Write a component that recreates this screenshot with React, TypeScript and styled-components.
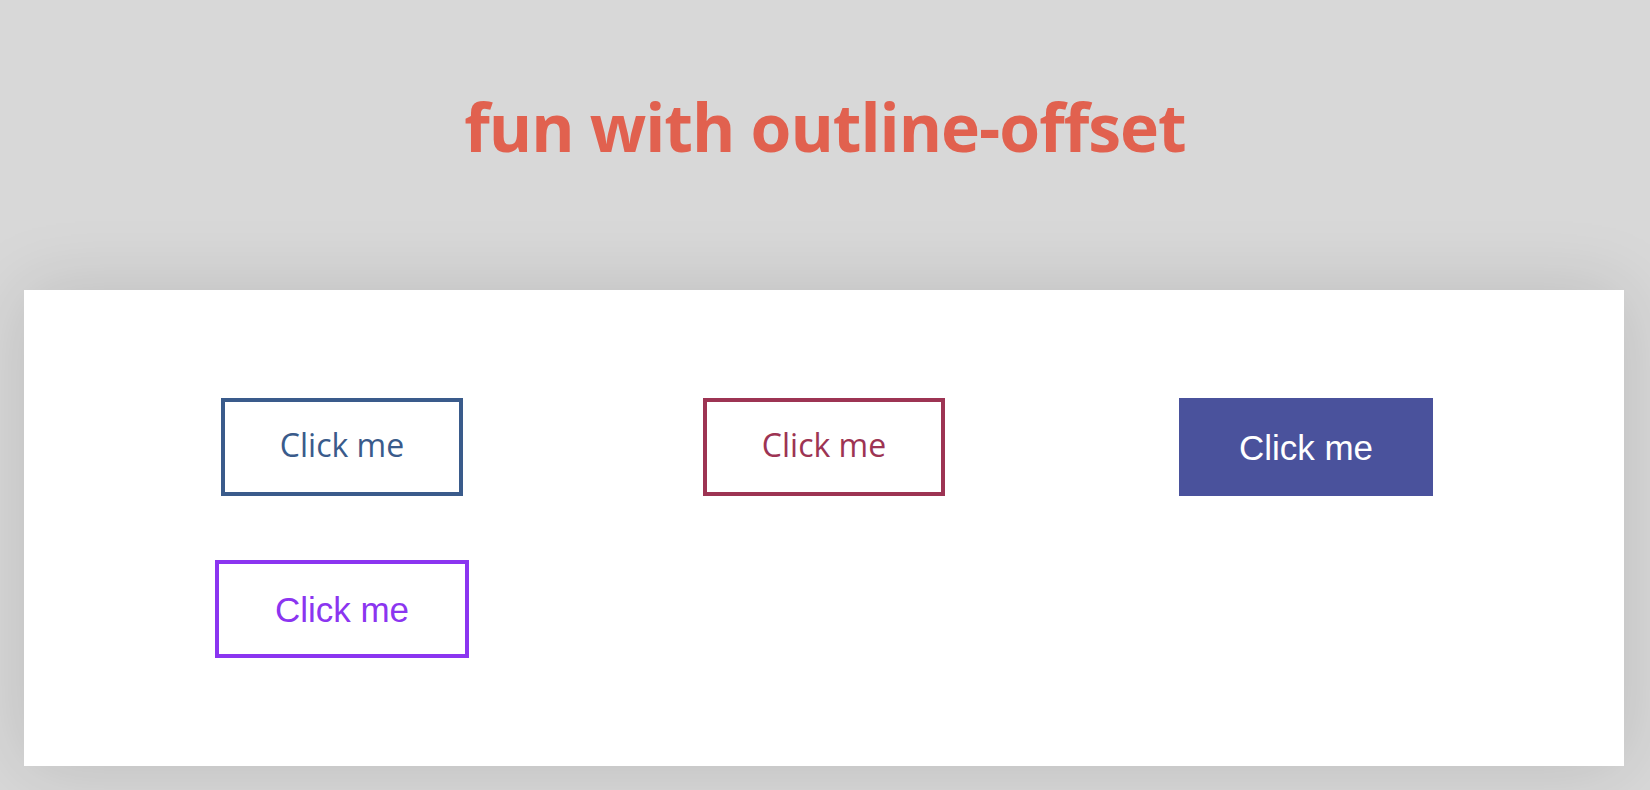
import React from "react";
import styled, { createGlobalStyle, css } from "styled-components";

const Global = createGlobalStyle`
  html, body { margin: 0; padding: 0; }
  body {
    background: #d8d8d8;
    font-family: "Open Sans", "Liberation Sans", sans-serif;
    min-height: 790px;
  }
  * { box-sizing: border-box; }
`;

const Header = styled.header`
  height: 290px;
  display: flex;
  align-items: center;
  justify-content: center;
  padding-bottom: 38px;
`;

const Title = styled.h1`
  margin: 0;
  font-family: "Open Sans", "Liberation Sans", sans-serif;
  font-weight: 700;
  font-size: 66px;
  letter-spacing: -1px;
  color: #e1614f;
  line-height: 1;
`;

const Panel = styled.main`
  margin: 0 26px 0 24px;
  height: 476px;
  background: #ffffff;
  box-shadow: 0 0 70px rgba(0, 0, 0, 0.13);
  padding: 76px 77px;
  display: grid;
  grid-template-columns: repeat(3, 482px);
  grid-auto-rows: 162px;
`;

const Cell = styled.div`
  display: flex;
  align-items: center;
  justify-content: center;
`;

type Variant = "blue" | "crimson" | "filled" | "violet";

const variants: Record<Variant, ReturnType<typeof css>> = {
  blue: css`
    width: 242px;
    border: 4px solid #3a5b8b;
    color: #3a5b8b;
    font-family: "Open Sans", sans-serif;
    font-size: 32px;
    padding-bottom: 5px;
  `,
  crimson: css`
    width: 242px;
    border: 4px solid #9d3453;
    color: #9d3453;
    font-family: "Open Sans", sans-serif;
    font-size: 32px;
    padding-bottom: 5px;
  `,
  filled: css`
    width: 254px;
    border: none;
    background: #4a529c;
    color: #ffffff;
    font-family: "Liberation Sans", Arial, sans-serif;
    font-size: 35px;
  `,
  violet: css`
    width: 254px;
    border: 4px solid #8b35f0;
    color: #8b35f0;
    font-family: "Liberation Sans", Arial, sans-serif;
    font-size: 35px;
  `,
};

const Button = styled.button<{ $variant: Variant }>`
  height: 98px;
  background: #ffffff;
  display: flex;
  align-items: center;
  justify-content: center;
  padding: 0;
  cursor: pointer;
  line-height: 1;
  ${(p) => variants[p.$variant]}
`;

export default function App() {
  return (
    <>
      <Global />
      <Header>
        <Title>fun with outline-offset</Title>
      </Header>
      <Panel>
        <Cell>
          <Button $variant="blue">Click me</Button>
        </Cell>
        <Cell>
          <Button $variant="crimson">Click me</Button>
        </Cell>
        <Cell>
          <Button $variant="filled">Click me</Button>
        </Cell>
        <Cell>
          <Button $variant="violet">Click me</Button>
        </Cell>
      </Panel>
    </>
  );
}
